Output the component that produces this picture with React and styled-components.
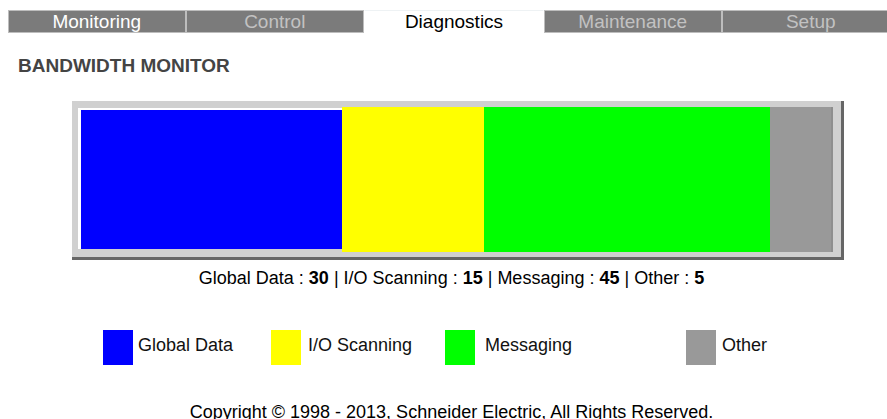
import React from "react";
import styled, { createGlobalStyle } from "styled-components";

const GlobalStyle = createGlobalStyle`
  body {
    margin: 0;
    background: #ffffff;
    font-family: "Liberation Sans", Arial, sans-serif;
    overflow: hidden;
  }
`;

const tabs = [
  { label: "Monitoring", state: "enabled" },
  { label: "Control", state: "disabled" },
  { label: "Diagnostics", state: "active" },
  { label: "Maintenance", state: "disabled" },
  { label: "Setup", state: "disabled" },
];

const segments = [
  { name: "Global Data", value: 30, color: "#0000ff", width: 264, inset: true },
  { name: "I/O Scanning", value: 15, color: "#ffff00", width: 142 },
  { name: "Messaging", value: 45, color: "#00ff00", width: 286 },
  { name: "Other", value: 5, color: "#999999", width: 63, edge: true },
];

const legend = [
  { name: "Global Data", color: "#0000ff", width: 168, gap: 5 },
  { name: "I/O Scanning", color: "#ffff00", width: 174, gap: 7 },
  { name: "Messaging", color: "#00ff00", width: 241, gap: 10 },
  { name: "Other", color: "#999999", width: 120, gap: 6 },
];

function App() {
  return (
    <Page>
      <GlobalStyle />
      <TabBar>
        {tabs.map((t) => (
          <Tab key={t.label} $state={t.state}>
            {t.label}
          </Tab>
        ))}
      </TabBar>

      <Heading>BANDWIDTH MONITOR</Heading>

      <BarFrame>
        {segments.map((s) => (
          <Segment
            key={s.name}
            $color={s.color}
            $width={s.width}
            $inset={s.inset}
            $edge={s.edge}
          />
        ))}
      </BarFrame>

      <Summary>
        {segments.map((s, i) => (
          <React.Fragment key={s.name}>
            {s.name} : <b>{s.value}</b>
            {i < segments.length - 1 ? " | " : ""}
          </React.Fragment>
        ))}
      </Summary>

      <LegendRow>
        {legend.map((l) => (
          <LegendItem key={l.name} $width={l.width}>
            <Swatch $color={l.color} />
            <LegendLabel $gap={l.gap}>{l.name}</LegendLabel>
          </LegendItem>
        ))}
      </LegendRow>

      <Footer>Copyright © 1998 - 2013, Schneider Electric, All Rights Reserved.</Footer>
    </Page>
  );
}

export default App;

const Page = styled.div`
  width: 887px;
  min-height: 419px;
  color: #000;
`;

const TabBar = styled.div`
  display: flex;
  padding: 10px 0 0 8px;
  width: 879px;
  overflow: hidden;
`;

const Tab = styled.div`
  flex: none;
  box-sizing: border-box;
  width: ${(p) => (p.$state === "active" ? "180px" : "177.5px")};
  height: 23px;
  margin-right: ${(p) => (p.$state === "active" ? "0" : "0.5px")};
  border: 1px solid ${(p) => (p.$state === "active" ? "#ffffff" : "#bdbdbd")};
  border-top-color: ${(p) => (p.$state === "active" ? "#eef2f4" : "#bdbdbd")};
  background: ${(p) => (p.$state === "active" ? "#ffffff" : "#7b7b7b")};
  color: ${(p) =>
    p.$state === "active" ? "#000000" : p.$state === "enabled" ? "#ffffff" : "#c2c2c2"};
  font-size: 19px;
  line-height: 21px;
  text-align: center;
  white-space: nowrap;
`;

const Heading = styled.h1`
  margin: 22px 0 0 18px;
  font-size: 19px;
  line-height: 22px;
  font-weight: bold;
  color: #444444;
`;

const BarFrame = styled.div`
  display: flex;
  box-sizing: border-box;
  width: 772px;
  height: 159px;
  margin: 24px 0 0 72px;
  padding: 6px 8px 5px 6px;
  background: #d0d0d0;
  border-right: 3px solid #666666;
  border-bottom: 3px solid #666666;
`;

const Segment = styled.div`
  flex: none;
  box-sizing: border-box;
  width: ${(p) => p.$width}px;
  height: ${(p) => (p.$inset ? "141px" : "145px")};
  margin-top: ${(p) => (p.$inset ? "1px" : "0")};
  background: ${(p) => p.$color};
  border-top: ${(p) => (p.$inset ? "2px solid #ffffff" : "none")};
  border-left: ${(p) => (p.$inset ? "3px solid #ffffff" : "none")};
  border-right: ${(p) => (p.$edge ? "2px solid #8e8e8e" : "none")};
`;

const Summary = styled.div`
  margin: 8px 0 0 16px;
  font-size: 18px;
  line-height: 21px;
  text-align: center;
`;

const LegendRow = styled.div`
  display: flex;
  margin-top: 41px;
  padding-left: 103px;
`;

const LegendItem = styled.div`
  flex: none;
  display: flex;
  align-items: center;
  width: ${(p) => p.$width}px;
`;

const Swatch = styled.div`
  flex: none;
  width: 30px;
  height: 35px;
  background: ${(p) => p.$color};
`;

const LegendLabel = styled.span`
  margin-left: ${(p) => p.$gap}px;
  margin-top: -4px;
  font-size: 18px;
  color: #111111;
`;

const Footer = styled.div`
  margin: 37px 0 0 16px;
  font-size: 18px;
  line-height: 21px;
  text-align: center;
`;
